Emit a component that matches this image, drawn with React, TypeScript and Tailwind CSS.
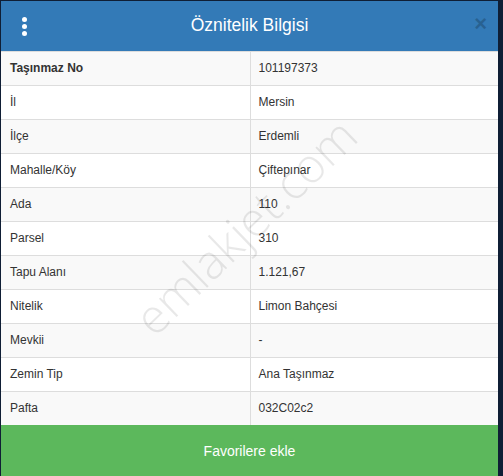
const rows: [string, string][] = [
  ['Taşınmaz No', '101197373'],
  ['İl', 'Mersin'],
  ['İlçe', 'Erdemli'],
  ['Mahalle/Köy', 'Çiftepınar'],
  ['Ada', '110'],
  ['Parsel', '310'],
  ['Tapu Alanı', '1.121,67'],
  ['Nitelik', 'Limon Bahçesi'],
  ['Mevkii', '-'],
  ['Zemin Tip', 'Ana Taşınmaz'],
  ['Pafta', '032C02c2'],
]

function App() {
  return (
    <div className="h-screen w-full overflow-hidden bg-[#0f1e35] pt-px pl-px font-['Liberation_Sans',Arial,sans-serif]">
      <div className="w-[497px] bg-white">
        {/* Header */}
        <div className="relative flex h-[50px] items-center justify-center bg-[#337ab7]">
          <div className="absolute left-[21px] top-[16px] flex flex-col gap-[2px]">
            <span className="block h-[5px] w-[5px] rounded-full bg-white" />
            <span className="block h-[5px] w-[5px] rounded-full bg-white" />
            <span className="block h-[5px] w-[5px] rounded-full bg-white" />
          </div>
          <h4 className="text-[17.5px] leading-none text-white">Öznitelik Bilgisi</h4>
          <button className="absolute right-[11px] top-[12px] text-[22px] font-bold leading-none text-black opacity-20">
            ×
          </button>
        </div>

        {/* Attribute table */}
        <div className="relative overflow-hidden">
          <table className="w-full border-collapse text-[12px] leading-[17px] text-[#333]">
            <tbody>
              {rows.map(([label, value], i) => (
                <tr key={label} className={i % 2 === 0 ? 'bg-[#f9f9f9]' : 'bg-white'}>
                  <td
                    className={`w-[249px] border-t border-r border-[#ddd] px-[9px] py-[8px] ${
                      i === 0 ? 'font-bold' : ''
                    }`}
                  >
                    {label}
                  </td>
                  <td className="border-t border-[#ddd] px-[8px] py-[8px]">{value}</td>
                </tr>
              ))}
            </tbody>
          </table>

          {/* Watermark */}
          <div className="pointer-events-none absolute left-[244px] top-[175px] -translate-x-1/2 -translate-y-1/2 -rotate-[44deg] whitespace-nowrap font-['Open_Sans',sans-serif] text-[48px] font-light leading-none text-black/[0.09]">
            emlakjet.com
          </div>
        </div>

        {/* Footer button */}
        <button className="flex h-[52px] w-full items-center justify-center bg-[#5cb85c] text-[14px] text-white">
          Favorilere ekle
        </button>
      </div>
    </div>
  )
}

export default App
